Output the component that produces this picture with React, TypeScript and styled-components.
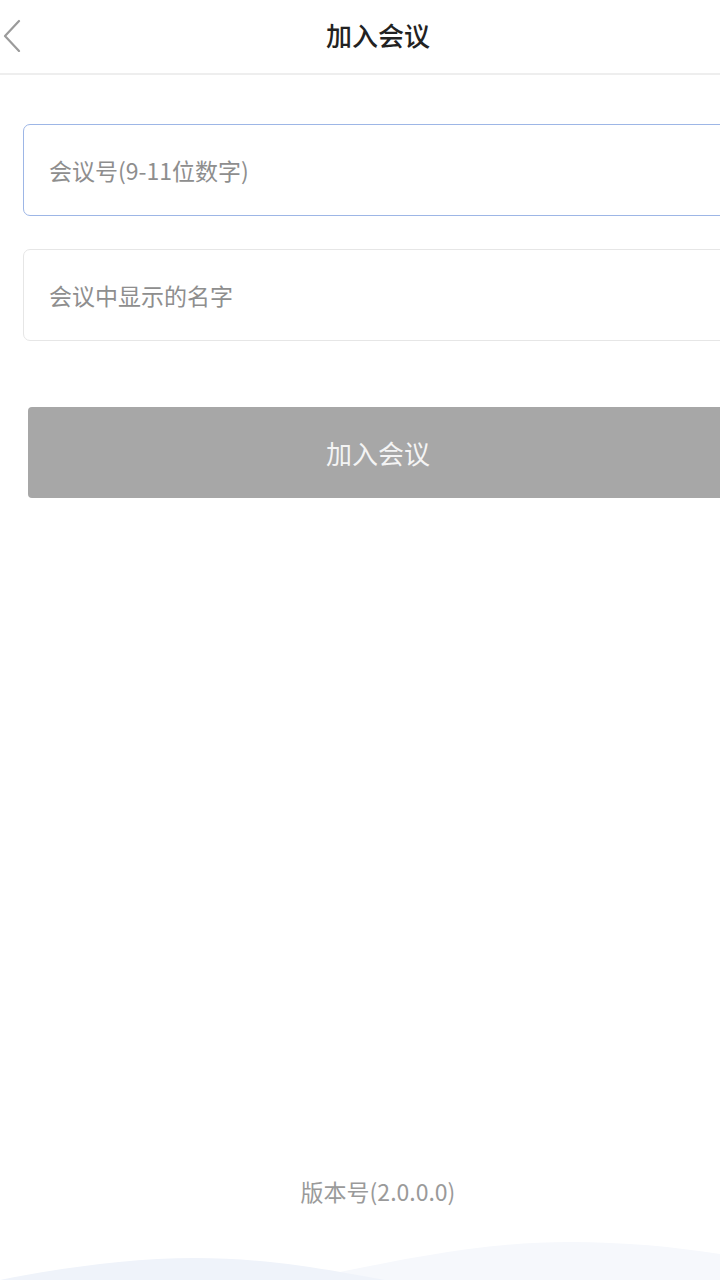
import styled, { createGlobalStyle } from "styled-components";

const GlobalStyle = createGlobalStyle`
  html, body {
    margin: 0;
    padding: 0;
    background: #ffffff;
    overflow: hidden;
  }
  body {
    font-family: "Noto Sans CJK SC", "Noto Sans", "Liberation Sans", sans-serif;
  }
  * {
    box-sizing: border-box;
  }
`;

const Page = styled.div`
  width: 756px;
  min-height: 1280px;
  display: flex;
  flex-direction: column;
  background: #ffffff;
`;

const Header = styled.div`
  height: 75px;
  display: grid;
  grid-template-columns: 80px 1fr 80px;
  align-items: center;
  border-bottom: 2px solid #eeeeee;
`;

const BackButton = styled.button`
  border: none;
  background: none;
  padding: 0 0 4px 2px;
  height: 100%;
  display: flex;
  align-items: center;
  cursor: pointer;
`;

const Title = styled.h1`
  margin: 0 0 4px;
  text-align: center;
  font-size: 26px;
  font-weight: 500;
  color: #222222;
`;

const Form = styled.div`
  display: flex;
  flex-direction: column;
  padding: 49px 23px 0;
  gap: 33px;
`;

const Field = styled.input<{ $focused?: boolean }>`
  height: 92px;
  width: 100%;
  border: 1.5px solid ${(p) => (p.$focused ? "#9db6e6" : "#e6e6e6")};
  border-radius: 7px;
  padding: 0 25px;
  font-family: inherit;
  font-size: 23px;
  color: #333333;
  outline: none;
  background: #ffffff;

  &::placeholder {
    color: #8e8e8e;
  }
`;

const JoinButton = styled.button`
  margin: 33px 5px 0;
  height: 91px;
  border: none;
  border-radius: 4px;
  background: #a7a7a7;
  color: #f4f4f4;
  font-family: inherit;
  font-size: 26px;
`;

const Spacer = styled.div`
  flex: 1;
`;

const Version = styled.div`
  text-align: center;
  font-size: 23px;
  color: #9a9a9a;
  margin-bottom: 22px;
`;

const Waves = styled.svg`
  display: block;
  width: 756px;
  height: 50px;
`;

const App = () => {
  return (
    <Page>
      <GlobalStyle />
      <Header>
        <BackButton aria-label="返回">
          <svg width="20" height="34" viewBox="0 0 20 34">
            <path
              d="M17 3 L3 18 L17 33"
              fill="none"
              stroke="#9b9b9b"
              strokeWidth="2.2"
              strokeLinecap="round"
              strokeLinejoin="round"
            />
          </svg>
        </BackButton>
        <Title>加入会议</Title>
        <div />
      </Header>
      <Form>
        <Field $focused placeholder="会议号(9-11位数字)" />
        <Field placeholder="会议中显示的名字" />
        <JoinButton>加入会议</JoinButton>
      </Form>
      <Spacer />
      <Version>版本号(2.0.0.0)</Version>
      <Waves viewBox="0 0 756 50" preserveAspectRatio="none">
        <path
          d="M300 50 C 400 30, 480 12, 570 12 C 640 12, 700 20, 756 30 L756 50 Z"
          fill="#f6f8fc"
        />
        <path
          d="M0 50 C 60 38, 130 28, 195 28 C 270 28, 330 40, 385 50 Z"
          fill="#eff3fa"
        />
      </Waves>
    </Page>
  );
};

export default App;
